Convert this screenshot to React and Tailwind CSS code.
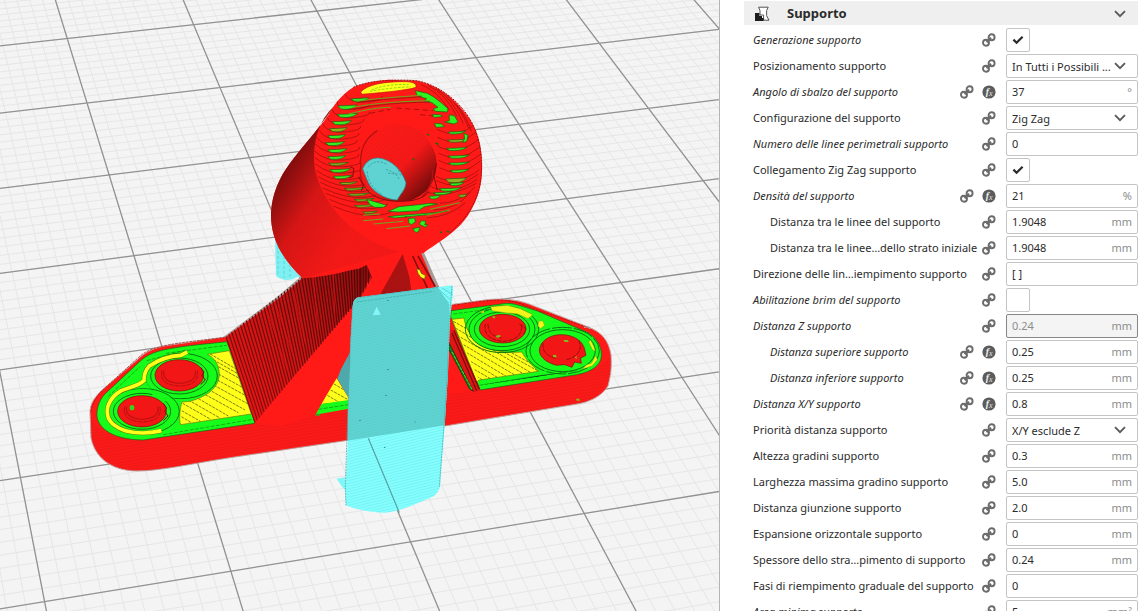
import { useId, useState } from 'react'

const IMPOSTAZIONI = [
  { nome: 'Generazione supporto', tipo: 'check', valore: true, modificata: true },
  { nome: 'Posizionamento supporto', tipo: 'scelta', valore: 'In Tutti i Possibili ...' },
  { nome: 'Angolo di sbalzo del supporto', valore: '37', unita: '°', modificata: true, fx: true },
  { nome: 'Configurazione del supporto', tipo: 'scelta', valore: 'Zig Zag' },
  { nome: 'Numero delle linee perimetrali supporto', valore: '0', modificata: true },
  { nome: 'Collegamento Zig Zag supporto', tipo: 'check', valore: true },
  { nome: 'Densità del supporto', valore: '21', unita: '%', modificata: true, fx: true },
  { nome: 'Distanza tra le linee del supporto', valore: '1.9048', unita: 'mm', figlia: true },
  { nome: 'Distanza tra le linee…dello strato iniziale', valore: '1.9048', unita: 'mm', figlia: true },
  { nome: 'Direzione delle lin…iempimento supporto', valore: '[ ]' },
  { nome: 'Abilitazione brim del supporto', tipo: 'check', valore: false, modificata: true },
  { nome: 'Distanza Z supporto', valore: '0.24', unita: 'mm', modificata: true, bloccata: true },
  { nome: 'Distanza superiore supporto', valore: '0.25', unita: 'mm', figlia: true, modificata: true, fx: true },
  { nome: 'Distanza inferiore supporto', valore: '0.25', unita: 'mm', figlia: true, modificata: true, fx: true },
  { nome: 'Distanza X/Y supporto', valore: '0.8', unita: 'mm', modificata: true, fx: true },
  { nome: 'Priorità distanza supporto', tipo: 'scelta', valore: 'X/Y esclude Z' },
  { nome: 'Altezza gradini supporto', valore: '0.3', unita: 'mm' },
  { nome: 'Larghezza massima gradino supporto', valore: '5.0', unita: 'mm' },
  { nome: 'Distanza giunzione supporto', valore: '2.0', unita: 'mm' },
  { nome: 'Espansione orizzontale supporto', valore: '0', unita: 'mm' },
  { nome: 'Spessore dello stra…pimento di supporto', valore: '0.24', unita: 'mm' },
  { nome: 'Fasi di riempimento graduale del supporto', valore: '0' },
  { nome: 'Area minima supporto', valore: '5', unita: 'mm²', modificata: true },
]

// proiezione del quadrato unitario sul quadrilatero p (ordine: 00, 10, 11, 01)
function proiezione(p) {
  const [[x0, y0], [x1, y1], [x2, y2], [x3, y3]] = p
  const dx1 = x1 - x2, dx2 = x3 - x2, dx3 = x0 - x1 + x2 - x3
  const dy1 = y1 - y2, dy2 = y3 - y2, dy3 = y0 - y1 + y2 - y3
  const det = dx1 * dy2 - dx2 * dy1
  const g = (dx3 * dy2 - dx2 * dy3) / det
  const h = (dx1 * dy3 - dx3 * dy1) / det
  return (u, v) => {
    const w = g * u + h * v + 1
    return [
      ((x1 - x0 + g * x1) * u + (x3 - x0 + h * x3) * v + x0) / w,
      ((y1 - y0 + g * y1) * u + (y3 - y0 + h * y3) * v + y0) / w,
    ]
  }
}

const piano = proiezione([[87, 103], [476, 57.7], [682, 377.5], [194, 451.3]])

// colonne e righe sono in celle da 10 mm, con passo da 1 mm per le linee sottili
function lineeGriglia(passo) {
  let d = ''
  const segmento = (a, b) => {
    const [xa, ya] = piano(a[0] / 3, a[1] / 4)
    const [xb, yb] = piano(b[0] / 3, b[1] / 4)
    d += `M${xa.toFixed(1)} ${ya.toFixed(1)}L${xb.toFixed(1)} ${yb.toFixed(1)}`
  }
  for (let i = -40; i <= 80; i += passo) segmento([i / 10, -4], [i / 10, 7])
  for (let j = -40; j <= 70; j += passo) segmento([-4, j / 10], [8, j / 10])
  return d
}

const GRIGLIA_FINE = lineeGriglia(1)
const GRIGLIA_GROSSA = lineeGriglia(10)

const ROSSO = '#ff1a18'
const VERDE = '#17fb1b'
const GIALLO = '#ffff1a'

const SAGOMA_TESTA = 'M385 29C350 32 310 38 280 52C245 74 222 104 205 135C175 180 130 225 90 280C60 320 36 370 33 430C32 500 60 560 128 625C230 620 330 585 420 545L490 550C520 525 590 490 625 435C660 380 668 330 666 280C664 225 655 190 630 148C595 95 540 45 470 32Z'
const SAGOMA_CILINDRO = 'M220 110C175 180 130 225 90 280C60 320 36 370 33 430C32 500 60 560 128 625L420 545C320 520 200 440 165 300C155 230 170 160 220 110Z'
const SAGOMA_FORO = 'M302 300C298 240 318 190 380 165C450 150 510 190 528 260C536 320 510 370 450 392L400 394C340 385 305 350 302 300Z'

// fessure verdi tra uno strato e l'altro: cx, cy, larghezza, altezza
const FESSURE_SX = [
  [300, 88, 54, 9], [262, 110, 58, 12], [262, 135, 62, 11], [245, 157, 58, 11], [235, 178, 54, 11],
  [230, 199, 54, 10], [225, 220, 58, 10], [232, 241, 58, 10], [230, 262, 54, 9], [235, 282, 60, 6],
  [240, 301, 62, 9], [247, 321, 56, 8], [265, 340, 54, 5], [285, 357, 66, 5], [295, 374, 66, 5],
  [312, 390, 60, 5], [316, 408, 66, 5], [330, 428, 44, 4],
]
const FESSURE_DX = [
  [590, 188, 54, 6], [592, 212, 60, 7], [590, 237, 62, 7], [596, 260, 64, 7], [596, 281, 62, 6],
  [598, 303, 56, 7], [588, 329, 64, 14], [590, 342, 44, 7], [570, 358, 66, 8], [548, 370, 56, 6],
  [524, 381, 34, 9], [608, 377, 26, 7],
]
const FESSURE_BASSO = [
  'M320 388l34 10 26 8-10 6-26 0-14-8z',
  'M385 424l32-14 60-6 34-4 22 2-40 8-18 12-60 4z',
  'M384 440l40-4 100-8 40-6-60 12-100 10z',
  'M446 446l18-2 2 12-12 8-8-6zM484 452l14 2-4 10 8 0-4 8-14-6-6-4zM458 476l22-4-4 12-8 4z',
]

function Testa() {
  return (
    <g transform="translate(260 70) scale(0.3333)">
      <clipPath id="ritaglioTesta">
        <path d={SAGOMA_TESTA} />
      </clipPath>
      <path d={SAGOMA_TESTA} fill={ROSSO} />
      <path d={SAGOMA_CILINDRO} fill="url(#ombraCilindro)" />
      <path d={SAGOMA_CILINDRO} fill="url(#stratiObliqui)" />

      {/* bordi degli strati sul toro */}
      <g fill="none" stroke="#a51110" strokeWidth="2.5" clipPath="url(#ritaglioTesta)">
        {FESSURE_SX.map(([x, y], i) => {
          const bordo = 163 + (i < 8 ? (8 - i) ** 2 * 1.4 : (i - 8) ** 2 * 0.7)
          return <path key={i} d={`M${bordo} ${y - 20}Q${x - 34} ${y + 14} ${x + 20} ${y + 8}T${x + 66} ${y - 10}`} />
        })}
        {FESSURE_DX.slice(0, 10).map(([x, y], i) => (
          <path key={i} d={`M${x - 60} ${y - 10}Q${x} ${y + 24} ${664 - Math.abs(i - 4) * 3} ${y - 30}`} />
        ))}
        <path d="M484 44q50 20 84 76M504 46q54 26 86 92M530 56q50 34 80 104M560 74q46 46 66 100M590 104q30 36 44 80M540 400q60 0 106-50M520 420q70 0 112-54M500 444q70-4 116-46" />
      </g>

      <g strokeWidth="2" stroke="#1d5a12">
        {[...FESSURE_SX, ...FESSURE_DX].map(([x, y, w, h], i) => (
          <path
            key={i}
            d={`M${x - w / 2} ${y - 2}Q${x} ${y - h / 4} ${x + w / 2} ${y - 5}Q${x + w / 4} ${y + h} ${x - w / 3} ${y + h / 2 + 1}Z`}
            fill={i % 5 === 4 || h < 6 ? '#91b51d' : '#35ee22'}
          />
        ))}
        {FESSURE_BASSO.map((d) => <path key={d} d={d} fill="#2bf51f" />)}
        <path d="M466 62l36 8 18 10 26 20 18 16-2 10-36-2-6-8 14-4-18-14-24-6 8-6-28-8z" fill="#2bf51f" />
        <path d="M568 134l16 4 10 18-12 6-28-6 14-4zM516 134l26 0 4 6-24 2zM524 160l20 2 10 8-26 2zM612 190l12 6-4 18-12 4 6-12z" fill="#2bf51f" />
      </g>
      <g fill="none" stroke="#6da81d" strokeWidth="3">
        <path d="M290 94C340 86 420 80 486 76M280 112C350 98 430 94 510 92M266 132C320 118 360 112 392 112" />
        <path d="M310 452l60-5M340 462l90-8M380 476l70-8M500 436l70-16M510 418l90-20M310 436l50-4" />
      </g>
      <path d="M330 130l60-12M410 114l110 8M480 134l40 4" stroke="#7b0c0b" strokeWidth="2" strokeDasharray="16 10" />
      <path d="M290 98C340 90 420 85 486 80M280 117C350 103 430 98 510 96" fill="none" stroke="#8a0d0c" strokeWidth="2" />

      {/* foro */}
      <path d={SAGOMA_FORO} fill="url(#ombraForo)" />
      <path d={SAGOMA_FORO} fill="url(#stratiCurvi)" />
      <path d="M352 182C316 204 298 240 302 290q-6 36 14 62M518 300q6 40-32 82" fill="none" stroke="#b51211" strokeWidth="4" />
      <path d="M318 356c20 28 60 38 100 38s70-6 90-30" fill="none" stroke="#7b0c0b" strokeWidth="3" />
      <path d="M270 290l12 6-4 24-10 4M296 320l14 26-6 18M530 280l-8 40 10 40" fill="none" stroke="#7b0c0b" strokeWidth="3" />
      <path d="M308 296C318 274 334 263 356 264C392 268 424 296 438 338C436 362 420 372 412 390C384 390 350 372 332 350C322 336 316 316 308 296Z" fill="#5fd2d2" stroke="#2a7f80" strokeWidth="2" />
      <path d="M324 292c12-16 32-24 58-8M322 304c0 30 20 56 46 70M378 298l28 12 12 18M384 310l28 2M410 290l14 30" fill="none" stroke="#328f92" strokeWidth="2" strokeDasharray="7 4" />
      <path d="M500 192l8 4M526 218l10 6M458 266l6 4M540 486l6 2M560 484l8 2M436 440l4 1" stroke="#1d6a10" strokeWidth="4" />

      {/* calotta superiore */}
      <path d="M302 66C322 44 370 34 440 35C462 36 470 42 468 52C440 62 340 70 306 73Z" fill={GIALLO} stroke="#c01413" strokeWidth="2" />
      <path d="M335 60C360 48 400 42 446 44M330 64C370 56 420 52 452 50" fill="none" stroke="#8fdc18" strokeWidth="3" strokeDasharray="8 4" />
      <path d="M280 52C320 34 380 27 470 32C540 46 600 96 630 148C662 200 668 270 664 310C660 390 620 445 570 488" fill="none" stroke="#9b100f" strokeWidth="3" strokeDasharray="6 3" />
    </g>
  )
}

function PiastraSinistra() {
  return (
    <g transform="translate(80 240) scale(0.3333)">
      <path d="M440 305C380 312 300 318 250 330C215 338 195 350 178 366L75 462C55 482 48 515 52 535C62 575 115 600 190 600L524 550L516 470Z" fill={VERDE} stroke="#0b6a10" strokeWidth="2" />
      <path d="M382 343L448 332L514 522L302 554C296 540 300 505 306 486L330 484C380 470 415 445 418 405C418 370 400 352 382 343Z" fill={GIALLO} stroke="#637b08" strokeWidth="2" />
      <clipPath id="ritaglioSx">
        <path d="M382 343L448 332L514 522L302 554L306 486L330 484C380 470 415 445 418 405C418 370 400 352 382 343Z" />
      </clipPath>
      <path
        d="M380 336l90 52M390 354l96 54M415 380l86 48M415 402l90 50M412 420l98 54M402 436l110 60M385 448l110 62M365 458l110 60M345 470l100 58M325 480l95 54M308 490l84 48M305 512l56 32M304 530l30 18"
        stroke="#3b3f05"
        strokeWidth="2"
        strokeDasharray="9 3"
        clipPath="url(#ritaglioSx)"
      />
      <path d="M258 340L440 316M200 362L320 330M84 470L180 380M250 584L520 538" stroke="#0d8613" strokeWidth="2" fill="none" strokeDasharray="12 4" />
      <g fill="none">
        {/* anelli verdi attorno ai fori */}
        <ellipse cx="304" cy="408" rx="108" ry="68" stroke="#08760e" strokeWidth="3" />
        <ellipse cx="298" cy="408" rx="95" ry="60" stroke={VERDE} strokeWidth="14" />
        <ellipse cx="298" cy="408" rx="86" ry="54" stroke="#08760e" strokeWidth="3" />
        <ellipse cx="190" cy="514" rx="108" ry="68" stroke="#08760e" strokeWidth="3" />
        <ellipse cx="186" cy="514" rx="95" ry="60" stroke={VERDE} strokeWidth="14" />
        <ellipse cx="186" cy="514" rx="86" ry="54" stroke="#08760e" strokeWidth="3" />
      </g>
      <path d="M214 480c-4-30 20-20 60-6l-30 14z" fill={VERDE} />
      <path d="M322 336l-20 10c-34 2-68 14-94 32-12 12-16 28-16 44-20 18-48 20-68 30-34 20-48 50-40 78 6 20 30 36 52 42 36 10 76 8 108 0" fill="none" stroke="#5f7a0a" strokeWidth="14" />
      <path d="M322 336l-20 10c-34 2-68 14-94 32-12 12-16 28-16 44-20 18-48 20-68 30-34 20-48 50-40 78 6 20 30 36 52 42 36 10 76 8 108 0" fill="none" stroke={GIALLO} strokeWidth="11" />
      {[[298, 406], [186, 514]].map(([cx, cy]) => (
        <g key={cx}>
          <ellipse cx={cx} cy={cy} rx="73" ry="47" fill="#f21716" stroke="#7c0b0a" strokeWidth="2" />
          <path d={`M${cx - 52} ${cy - 14}q-10 42 52 46q62-2 54-46`} fill="none" stroke="#940e0d" strokeWidth="2" strokeDasharray="14 3" />
          <path d={`M${cx - 46} ${cy - 14}q-8 34 46 38q54-2 48-38`} fill="none" stroke="#c01211" strokeWidth="4" />
          <path d={`M${cx + 64} ${cy - 24}l10 14-6 10 10 14-14 14`} fill="none" stroke="#7c0b0a" strokeWidth="3" />
        </g>
      ))}
      <ellipse cx="156" cy="503" rx="7" ry="8" fill="#35d51c" />
      <path d="M435 292C380 300 300 306 250 318C215 325 190 338 176 352L66 452C44 474 34 500 32 520" fill="none" stroke="#a10f0e" strokeWidth="2" strokeDasharray="8 3" />

      {/* scorcio dietro la nervatura */}
      <path d="M770 415L806 474V484L724 492Z" fill={GIALLO} />
      <path d="M762 432l44 26M752 450l54 30M742 466l34 20" stroke="#3b3f05" strokeWidth="2" strokeDasharray="9 3" />
      <path d="M724 492L806 480V506L706 524Z" fill={VERDE} />
      <path d="M716 508L806 494" stroke="#0d8613" strokeWidth="2" strokeDasharray="12 4" />
      <path d="M810 336L806 474L772 416L782 390Z" fill="#4ea9ad" />
      <path d="M678 522l6 4M706 524l14 0" stroke="#2fa81b" strokeWidth="6" />
    </g>
  )
}

function PiastraDestra() {
  return (
    <g transform="translate(320 240) scale(0.3333)">
      <path d="M394 212L560 190C590 190 620 205 650 212L800 276C836 296 850 330 842 360C832 386 800 398 770 404L480 450L392 230Z" fill={VERDE} stroke="#0b6a10" strokeWidth="2" />
      <path d="M396 238L432 234C436 262 450 290 476 310C510 334 560 340 606 336C616 358 636 376 656 394L478 420L470 426Z" fill={GIALLO} stroke="#637b08" strokeWidth="2" />
      <clipPath id="ritaglioDx">
        <path d="M396 238L432 234C436 262 450 290 476 310C510 334 560 340 606 336C616 358 636 376 656 394L478 420Z" />
      </clipPath>
      <path
        d="M400 244l60 34M406 264l230 136M412 286l220 128M420 308l200 118M430 332l150 90M442 358l110 66M452 382l80 46M470 280l180 100M540 330l120 66M460 402l30 20"
        stroke="#3b3f05"
        strokeWidth="2"
        strokeDasharray="9 3"
        clipPath="url(#ritaglioDx)"
      />
      <path d="M478 436L650 408L770 392M400 222l120-16" stroke="#0d8613" strokeWidth="2" strokeDasharray="12 4" />
      <g fill="none">
        <ellipse cx="546" cy="268" rx="110" ry="70" stroke="#08760e" strokeWidth="3" />
        <ellipse cx="546" cy="268" rx="91" ry="58" stroke={VERDE} strokeWidth="14" />
        <ellipse cx="546" cy="268" rx="83" ry="52" stroke="#08760e" strokeWidth="3" />
        <ellipse cx="546" cy="268" rx="99" ry="64" stroke="#08760e" strokeWidth="3" />
        <ellipse cx="728" cy="332" rx="110" ry="70" stroke="#08760e" strokeWidth="3" strokeDasharray="60 6" />
        <ellipse cx="728" cy="332" rx="91" ry="58" stroke={VERDE} strokeWidth="12" />
        <ellipse cx="728" cy="332" rx="98" ry="63" stroke="#08760e" strokeWidth="3" />
      </g>
      <path d="M512 200l50-4 40 10 36 18-14 12-30-14-40-4-38-6zM656 244l12-2 6 14-12 10-8-8zM478 216l14-4 0 8zM812 300l10 20 4 14-8-4-12-24zM828 346l4 14-16 18-30 10 14-14 14-4z" fill="#f2f41a" stroke="#637b08" strokeWidth="1" />
      <ellipse cx="548" cy="266" rx="70" ry="43" fill="#f21716" stroke="#7c0b0a" strokeWidth="2" />
      <path d="M658 330c2-26 30-46 66-46 40 0 66 22 70 44l4 18-16 8 2 16-20-4-8 16-22-8-24 2c-30-8-52-24-52-46z" fill="#f21716" stroke="#7c0b0a" strokeWidth="2" />
      <path d="M496 252c-6 30 14 48 50 52 40 0 64-22 58-50M504 252c0 24 14 38 42 42M598 252l20 14-6 16M670 310c-6 24 14 40 40 46M776 300c14 30-4 52-40 60" fill="none" stroke="#940e0d" strokeWidth="3" strokeDasharray="14 3" />
      <path d="M526 288l14-4 2 6-10 4zM730 300l14 0 2 6-12 0zM698 346l10-2 2 8-10 0zM764 352l6-4 0 10zM768 476l10 0 2 6-10 0zM514 230l10 6 2-8" fill="#86b91e" />
      <path d="M400 196C450 188 500 180 540 180C580 182 600 190 640 206L810 264" fill="none" stroke="#a10f0e" strokeWidth="2" strokeDasharray="8 3" />
      <path d="M792 262l12-2 6 6" fill="none" stroke="#a9a4a2" strokeWidth="4" />

      {/* spigolo della nervatura destra */}
      <path d="M392 268L404 272L482 450L462 456L388 316Z" fill="#e01615" />
      <path d="M396 280L470 452M402 272L478 448" stroke="#7b0c0b" strokeWidth="4" />
      <path d="M388 310L460 454L448 446L386 326Z" fill="#0f7f22" stroke="#0a2e08" strokeWidth="2" />
      <path d="M396 336L456 448" stroke="#3dea22" strokeWidth="3" strokeDasharray="10 3" />
    </g>
  )
}

function Nervature() {
  const righe = []
  for (let i = 0; i <= 46; i++) {
    const t = i / 46
    // la nervatura scende dal bordo superiore fino allo spigolo frontale
    const x = 438 + t * 402
    const y = t < 0.57 ? 290 - (t / 0.57) * 178 : 112 - ((t - 0.57) / 0.43) * 27
    const xb = 525 + t * 315
    const yb = 548 - t * 373
    righe.push(`M${x.toFixed(0)} ${y.toFixed(0)}L${xb.toFixed(0)} ${yb.toFixed(0)}`)
  }
  return (
    <g>
      <g transform="translate(80 240) scale(0.3333)">
        <path d="M430 291L590 172L662 110L680 112L445 294Z" fill="#a59a98" />
        <path d="M436 292L600 172L670 112L860 60L960 30L1040 20L930 180L810 336L706 524L600 560L524 548Z" fill={ROSSO} />
        <path d="M438 292L600 174L670 113L840 86L900 54L840 170L526 548Z" fill="url(#ombraNervatura)" />
        <path d={righe.join('')} stroke="url(#trattoNervatura)" strokeWidth="3.5" />
        <path d="M560 206l64 190M586 190l58 168M640 150l36 160M700 110l14 160M760 100l4 120" stroke="#e51615" strokeWidth="3" opacity=".7" />
        <path d="M840 84v92L900 70L900 54z" fill="url(#stratiVerticali)" />
      </g>
      <g transform="translate(320 240) scale(0.3333)">
        <path d="M130 50L240 20L300 30L362 150L370 260L180 170Z" fill={ROSSO} />
        <path d="M302 36L312 38L356 138L350 150Z" fill="#a59a98" />
        <path d="M248 42L268 110L274 152L180 165Z" fill="#b01312" />
        <path d="M248 42L268 110L274 152L180 165Z" fill="url(#stratiObliqui)" />
        <path d="M278 48L322 144M294 48L346 140" stroke="#8a0d0c" strokeWidth="5" />
        <path d="M290 86l10 4 4 10 12 6-2 12-12-6-8-12z" fill={GIALLO} stroke="#54500a" strokeWidth="2" />
      </g>
    </g>
  )
}

function Supporto() {
  return (
    <g transform="translate(320 240) scale(0.3333)">
      <path d="M50 716L74 712L80 754L66 740Z" fill="#7ff6f7" />
      <path d="M98 200C100 182 104 174 118 172L396 136L400 150L390 240L384 400L374 556L360 740C354 762 340 772 320 778C270 800 230 816 190 818C140 816 100 806 78 796L76 740L84 600L92 300Z" fill="#84feff" />
      <path d="M98 200C100 182 104 174 118 172L354 142L388 194L384 400L374 556L82 602L84 500L92 300Z" fill="#60d3d1" />
      <path d="M98 200C100 182 104 174 118 172L396 136L400 150L390 240L384 400L374 556L360 740C354 762 340 772 320 778C270 800 230 816 190 818C140 816 100 806 78 796L76 740L84 600L92 300Z" fill="url(#stratiSupporto)" />
      <path d="M145 595L238 818" stroke="#559fa2" strokeWidth="3.5" />
      <path d="M118 172L354 142M110 186L340 154" stroke="#3aa3a4" strokeWidth="2" strokeDasharray="8 3" />
      <path d="M98 200L92 300L84 500L76 740L78 796M396 138L388 240L382 400L372 556L358 740" fill="none" stroke="#47aaac" strokeWidth="2.5" strokeDasharray="5 3" />
      <path d="M356 148l34 30M366 144l32 20M360 160l28 30" stroke="#60d3d1" strokeWidth="3" />
      <path d="M170 200L158 226L182 224Z" fill="#86f4f6" />
      <path d="M204 180v2M204 388v2M198 466v2M194 622v2M120 540v2M286 545v2" stroke="#285f60" strokeWidth="4" />
    </g>
  )
}

function Anteprima() {
  return (
    <svg viewBox="0 0 719 611" preserveAspectRatio="xMidYMid slice" className="block h-full w-full" role="img" aria-label="Anteprima degli strati">
      <defs>
        <linearGradient id="ombraCilindro" x1="0" y1=".25" x2=".6" y2=".75">
          <stop offset="0" stopColor="#4d0808" />
          <stop offset=".25" stopColor="#8e0e0e" />
          <stop offset=".55" stopColor="#e01716" />
          <stop offset="1" stopColor={ROSSO} />
        </linearGradient>
        <linearGradient id="ombraForo" x1=".25" y1=".2" x2=".9" y2=".85">
          <stop offset="0" stopColor={ROSSO} />
          <stop offset=".5" stopColor="#f81918" />
          <stop offset=".75" stopColor="#b51211" />
          <stop offset="1" stopColor="#6b0b0a" />
        </linearGradient>
        <linearGradient id="ombraNervatura" x1="0" y1="1" x2="1" y2="0">
          <stop offset="0" stopColor="#ee1716" />
          <stop offset=".5" stopColor="#cc1413" />
          <stop offset="1" stopColor="#8a0d0c" />
        </linearGradient>
        <linearGradient id="trattoNervatura" gradientUnits="userSpaceOnUse" x1="480" y1="540" x2="800" y2="90">
          <stop offset="0" stopColor="#8a0d0c" />
          <stop offset="1" stopColor="#450707" />
        </linearGradient>
        <linearGradient id="sfumaturaStrati" x1=".2" y1=".2" x2=".8" y2=".8">
          <stop offset=".4" stopColor="#fff" stopOpacity="0" />
          <stop offset="1" stopColor="#fff" />
        </linearGradient>
        <pattern id="stratiObliqui" width="6" height="6" patternUnits="userSpaceOnUse" patternTransform="rotate(52)">
          <path d="M0 1H6" stroke="#5a0909" strokeWidth="2" opacity=".3" />
        </pattern>
        <pattern id="stratiCurvi" width="7" height="7" patternUnits="userSpaceOnUse" patternTransform="rotate(60)">
          <path d="M0 1H7" stroke="#8a0d0c" strokeWidth="2" opacity=".22" />
        </pattern>
        <pattern id="stratiVerticali" width="8" height="8" patternUnits="userSpaceOnUse">
          <path d="M2 0V8" stroke="#52090a" strokeWidth="4" />
        </pattern>
        <pattern id="stratiPiastra" width="6" height="3" patternUnits="userSpaceOnUse" patternTransform="rotate(-8.5)">
          <path d="M0 1H6" stroke="#b51211" strokeWidth="1" opacity=".35" />
        </pattern>
        <pattern id="stratiSupporto" width="12" height="8" patternUnits="userSpaceOnUse" patternTransform="rotate(-14)">
          <path d="M0 1H12" stroke="#3eb8ba" strokeWidth="2" opacity=".3" />
        </pattern>
      </defs>
      <rect width="719" height="611" fill="#f4f4f4" />
      <path d={GRIGLIA_FINE} stroke="#e6e6e6" strokeWidth="1" />
      <path d={GRIGLIA_GROSSA} stroke="#929292" strokeWidth="1.3" />

      {/* supporto posteriore */}
      <path d="M275 238L304 277L297 277L293 279Q284 282 276 276Z" fill="#7ff0f2" />
      <path d="M278 246v30M284 256v22M290 264v14" stroke="#62d3d8" strokeDasharray="3 2" />

      {/* piastra di base */}
      <path d="M225 337L170 345C155 347 145 352 138 359L101 391C92 400 90 406 90 413L91 438C96 462 117 471 137 471C160 471 190 464 228 458L445 426L577 404C590 402 602 396 608 386C610 378 612 370 611 355C609 341 602 332 588 327L529 304C515 299 500 298 485 300L440 306L300 300Z" fill={ROSSO} stroke="#c0a8a5" strokeWidth="1" />
      <path d="M90 413C93 430 115 441 143 440L254 424L347 410L480 390L573 375C595 371 608 364 611 352L611 372C606 390 594 402 577 404L445 426L228 458C190 464 160 471 137 471C117 471 96 462 91 438Z" fill="url(#stratiPiastra)" />
      <PiastraSinistra />
      <PiastraDestra />
      <Nervature />
      <Testa />
      <Supporto />
    </svg>
  )
}

function IconaCatena() {
  return (
    <svg viewBox="0 0 14 14" className="h-3.5 w-3.5 shrink-0" fill="none" stroke="#6b6b6b" aria-hidden="true">
      <circle cx="9.6" cy="4.2" r="3" strokeWidth="1.9" />
      <circle cx="4" cy="9.8" r="3" strokeWidth="1.9" />
      <path d="M4.6 9.2L9 4.8" strokeWidth="2.2" />
    </svg>
  )
}

function IconaFormula() {
  return (
    <svg viewBox="0 0 14 14" className="h-3.5 w-3.5 shrink-0" aria-hidden="true">
      <circle cx="7" cy="7" r="6.6" fill="#5c5c5c" />
      <text x="3.8" y="10" fill="#f2f2f2" fontSize="10" fontWeight="bold" fontStyle="italic" fontFamily="Liberation Serif, serif">f</text>
      <text x="7" y="11.4" fill="#e0e0e0" fontSize="8" fontStyle="italic" fontFamily="Liberation Serif, serif">x</text>
    </svg>
  )
}

function Freccia({ className }) {
  return (
    <svg viewBox="0 0 12 8" className={`h-2 w-3 ${className}`} fill="none" stroke="#5a5a5a" strokeWidth="1.9" aria-hidden="true">
      <path d="M1 1.2L6 6.2L11 1.2" />
    </svg>
  )
}

function IconaSupporto() {
  return (
    <svg viewBox="0 0 16 16" className="h-4 w-4" aria-hidden="true">
      <path d="M4.6 1.2H14.2L12.6 4.6V9.6L15 14.2H9.6" fill="#fff" stroke="#555" strokeWidth="1" />
      <path d="M4.6 1.2L6 4.6V9H9.6V14.2" fill="#fff" stroke="#555" strokeWidth="1" />
      <path d="M1 7H5.4V10H8V12H9.6V15H1Z" fill="#1c1c1c" />
    </svg>
  )
}

function Campo({ id, voce }) {
  const [valore, setValore] = useState(voce.valore)
  if (voce.tipo === 'check') {
    return (
      <span className="relative block h-6 w-6">
        <input
          id={id}
          type="checkbox"
          checked={valore}
          onChange={(e) => setValore(e.target.checked)}
          className="block h-6 w-6 appearance-none rounded-xs border border-[#c4c4c4] bg-white"
        />
        {valore && (
          <svg viewBox="0 0 12 10" className="pointer-events-none absolute inset-0 m-auto h-2.5 w-3" fill="none" stroke="#2b2b2b" strokeWidth="2.2" aria-hidden="true">
            <path d="M1.4 4.6L4.6 7.8L10.6 1.8" />
          </svg>
        )}
      </span>
    )
  }
  if (voce.tipo === 'scelta') {
    return (
      <span className="relative block">
        <select
          id={id}
          value={valore}
          onChange={(e) => setValore(e.target.value)}
          className="block h-6 w-full appearance-none rounded-xs border border-[#c4c4c4] bg-white pl-[5px] pt-px text-[11px] leading-5 text-[#2b2b2b]"
        >
          <option>{voce.valore}</option>
        </select>
        <Freccia className="pointer-events-none absolute right-3 top-2" />
      </span>
    )
  }
  return (
    <span
      className={`flex h-6 items-center rounded-xs border px-[5px] ${voce.bloccata ? 'border-[#868686] bg-[#f4f4f4]' : 'border-[#c4c4c4] bg-white'}`}
    >
      <input
        id={id}
        type="text"
        value={valore}
        disabled={voce.bloccata}
        onChange={(e) => setValore(e.target.value)}
        className={`w-0 min-w-0 flex-1 bg-transparent outline-none ${voce.bloccata ? 'text-[#8c8c8c]' : 'text-[#2b2b2b]'}`}
      />
      {voce.unita && <span className="text-[#8c8c8c]">{voce.unita}</span>}
    </span>
  )
}

function Riga({ voce }) {
  const id = useId()
  return (
    <li className="flex h-6 items-center">
      <div className={`flex min-w-0 flex-1 items-center ${voce.figlia ? 'pl-[26px]' : 'pl-[9px]'}`}>
        <label htmlFor={id} className={`w-0 flex-1 whitespace-nowrap ${voce.modificata ? 'italic' : ''}`}>{voce.nome}</label>
        <span className="flex gap-2 pr-[10px]">
          <IconaCatena />
          {voce.fx && <IconaFormula />}
        </span>
      </div>
      <div className="w-[132px] shrink-0">
        <Campo id={id} voce={voce} />
      </div>
    </li>
  )
}

export default function App() {
  const [aperta, setAperta] = useState(true)
  return (
    <div className="flex h-screen overflow-hidden bg-white font-['Noto_Sans',sans-serif] text-[11px] text-[#2b2b2b]">
      <main className="min-w-0 flex-1 border-r border-[#b4b4b4]">
        <Anteprima />
      </main>
      <aside className="w-[422px] shrink-0 overflow-hidden pl-6 pr-1 pt-px">
        <button
          type="button"
          onClick={() => setAperta(!aperta)}
          aria-expanded={aperta}
          className="flex h-6 w-full items-center bg-[#efefef] pl-[10px] pr-3 pt-0.5"
        >
          <IconaSupporto />
          <span className="ml-[17px] flex-1 text-left text-[13px] font-bold">Supporto</span>
          <Freccia className="" />
        </button>
        {aperta && (
          <ul className="mt-[3px] flex flex-col gap-0.5">
            {IMPOSTAZIONI.map((voce) => <Riga key={voce.nome} voce={voce} />)}
          </ul>
        )}
      </aside>
    </div>
  )
}
